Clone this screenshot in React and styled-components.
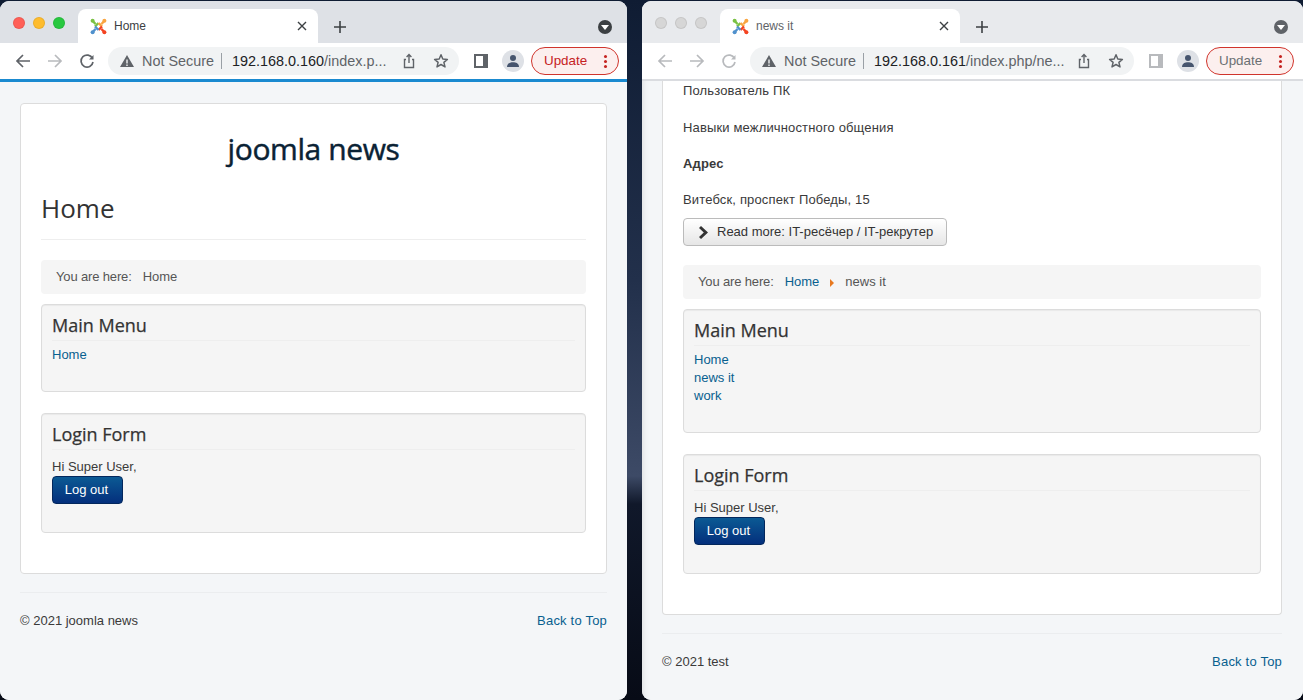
import React from 'react';
import styled, { createGlobalStyle } from 'styled-components';

const GlobalStyle = createGlobalStyle`
  html, body { margin: 0; padding: 0; height: 700px; overflow: hidden; }
  body { font-family: "Liberation Sans", Arial, sans-serif; font-size: 13px; line-height: 18px; color: #3a3a3a; }
  * { box-sizing: border-box; }
`;

const Desktop = styled.div`
  width: 1303px;
  height: 700px;
  display: flex;
  justify-content: space-between;
  overflow: hidden;
  background: linear-gradient(180deg, #0f1c33 0%, #22304b 40%, #3d4a66 68%, #10182a 72%, #070b16 100%);
`;

const Window = styled.div`
  width: ${p => p.$width}px;
  height: 699px;
  margin-top: 1px;
  display: flex;
  flex-direction: column;
  border-radius: 9px;
  overflow: hidden;
  background: #f4f6f8;
`;

const TitleBar = styled.div`
  height: 42px;
  flex: none;
  padding: 8px 0 0 13px;
  display: flex;
  align-items: flex-start;
  background: ${p => p.$active ? '#dee1e6' : '#e8eaed'};
`;

const Lights = styled.div`
  display: flex;
  gap: 8px;
  width: 65px;
  flex: none;
  padding-top: 8px;
`;

const Light = styled.span`
  width: 12px;
  height: 12px;
  border-radius: 50%;
  background: ${p => p.$color};
  box-shadow: inset 0 0 0 1px rgba(0,0,0,.08);
`;

const Tab = styled.div`
  width: 240px;
  height: 34px;
  flex: none;
  border-radius: 8px 8px 0 0;
  background: #fff;
  display: flex;
  align-items: center;
  padding: 0 8px 0 12px;
  gap: 7px;
  color: ${p => p.$active ? '#3c4043' : '#5f6368'};
  font-size: 12px;
`;

const TabTitle = styled.span`
  flex: 1;
`;

const CloseX = styled.svg`
  width: 10px;
  height: 10px;
  margin-right: 3px;
`;

const PlusIcon = styled.svg`
  width: 14px;
  height: 14px;
  margin: 11px 0 0 15px;
  flex: none;
`;

const TabMenu = styled.div`
  width: 14px;
  height: 14px;
  margin: 11px 15px 0 auto;
  border-radius: 50%;
  background: ${p => p.$active ? '#3c4043' : '#5f6368'};
  display: flex;
  align-items: center;
  justify-content: center;
  &::after {
    content: '';
    border-left: 4px solid transparent;
    border-right: 4px solid transparent;
    border-top: 5px solid #fff;
    margin-top: 1px;
  }
`;

const Toolbar = styled.div`
  height: 36px;
  flex: none;
  padding: 4px 0 4px 15px;
  background: #fff;
  display: flex;
  align-items: center;
`;

const NavGroup = styled.div`
  display: flex;
  align-items: center;
  gap: 16px;
  width: 93px;
  flex: none;
`;

const NavSvg = styled.svg`
  width: 16px;
  height: 16px;
  flex: none;
`;

const Omnibox = styled.div`
  width: ${p => p.$width}px;
  height: 28px;
  flex: none;
  border-radius: 14px;
  background: #f1f3f4;
  display: flex;
  align-items: center;
  padding: 0 10px 0 11px;
  font-size: 14.4px;
  white-space: nowrap;
  color: #202124;
`;

const NotSecure = styled.span`
  color: #5f6368;
  margin-left: 7px;
`;

const Sep = styled.span`
  width: 1px;
  height: 16px;
  background: #9aa0a6;
  margin: 0 10px 0 7px;
`;

const Url = styled.span`
  flex: 1;
  & > i { font-style: normal; color: #5f6368; }
`;

const OmniIcons = styled.div`
  display: flex;
  align-items: center;
  gap: 16px;
`;

const PanelIcon = styled.div`
  width: 14px;
  height: 14px;
  margin-left: 15px;
  flex: none;
  border: 2px solid ${p => p.$active ? '#5f6368' : '#b8babd'};
  border-right-width: 5px;
  background: #fff;
`;

const Avatar = styled.div`
  width: 22px;
  height: 22px;
  margin-left: 14px;
  flex: none;
  border-radius: 50%;
  background: #dee1e6;
  display: flex;
  align-items: center;
  justify-content: center;
`;

const UpdatePill = styled.div`
  width: 88px;
  height: 28px;
  margin-left: 7px;
  flex: none;
  border: 1px solid #d0342c;
  border-radius: 14px;
  background: #fcefee;
  color: ${p => p.$active ? '#c5221f' : '#6b6f73'};
  font-size: 13.4px;
  display: flex;
  align-items: center;
  padding: 0 11px 0 12px;
  justify-content: space-between;
`;

const Dots = styled.span`
  display: flex;
  flex-direction: column;
  gap: 2px;
  & > b { width: 3px; height: 3px; border-radius: 50%; background: #c5221f; display: block; }
`;

const LoadBar = styled.div`
  height: ${p => p.$height}px;
  flex: none;
  background: ${p => p.$color};
`;

const Page = styled.div`
  flex: 1;
  min-height: 0;
  overflow: hidden;
  padding: ${p => p.$top}px ${p => p.$right}px 0 20px;
  background: #f4f6f8;
  ${p => p.$shaded && 'box-shadow: inset 7px 0 6px -6px rgba(0,0,0,.1);'}
`;

const Card = styled.div`
  background: #fff;
  border: 1px solid #dcdcdc;
  border-radius: 4px;
  padding: ${p => p.$top}px 20px 19px;
  ${p => p.$scrolled && 'border-top: 0; border-radius: 0 0 4px 4px;'}
`;

const Brand = styled.div`
  text-align: center;
  font-family: "Open Sans", sans-serif;
  font-weight: 400;
  font-size: 30px;
  line-height: 38px;
  color: #0a2234;
  letter-spacing: -0.4px;
  -webkit-text-stroke: 0.45px #0a2234;
  margin-bottom: 23px;
`;

const PageHeading = styled.h2`
  margin: 0 0 20px;
  height: 49px;
  border-bottom: 1px solid #eee;
  font-family: "Open Sans", sans-serif;
  font-weight: 400;
  font-size: 26px;
  line-height: 34px;
  color: #333;
`;

const Para = styled.p`
  margin: 0 0 ${p => p.$gap || 18}px;
  font-weight: ${p => p.$bold ? 700 : 400};
  letter-spacing: 0.15px;
`;

const ReadMore = styled.a`
  display: flex;
  width: fit-content;
  align-items: center;
  height: 28px;
  padding: 0 13px 0 14px;
  margin-top: -9px;
  margin-bottom: 19px;
  border: 1px solid #bbb;
  border-radius: 4px;
  background: linear-gradient(180deg, #fff, #e6e6e6);
  color: #333;
  gap: 8px;
`;

const Breadcrumb = styled.div`
  height: 34px;
  margin-bottom: 10px;
  border-radius: 4px;
  background: #f5f5f5;
  padding: 0 15px;
  display: flex;
  align-items: center;
  color: #555;
`;

const Here = styled.span`
  margin-right: 11px;
  letter-spacing: -0.15px;
`;

const Crumb = styled.a`
  color: #08608f;
  letter-spacing: ${p => p.$wide ? '0.2px' : '0'};
`;

const CrumbArrow = styled.span`
  width: 0;
  height: 0;
  margin: 2px 11px 0 11px;
  border-left: 4px solid #e8791f;
  border-top: 4px solid transparent;
  border-bottom: 4px solid transparent;
`;

const Module = styled.div`
  height: ${p => p.$height}px;
  margin-bottom: 21px;
  padding: 10px;
  background: #f5f5f5;
  border: 1px solid #dcdcdc;
  border-radius: 4px;
  box-shadow: inset 0 1px 1px rgba(0,0,0,.05);
`;

const ModuleTitle = styled.h3`
  margin: 0 0 ${p => p.$gap}px;
  height: 26px;
  border-bottom: 1px solid #eee;
  font-family: "Open Sans", sans-serif;
  font-weight: 400;
  font-size: 18px;
  line-height: 21px;
  color: #333;
  -webkit-text-stroke: 0.25px #333;
`;

const MenuLink = styled.a`
  display: block;
  color: #08608f;
`;

const LogoutButton = styled.button`
  display: block;
  width: 71px;
  height: 28px;
  padding: 0 2px 0 0;
  border: 1px solid #03275c;
  border-radius: 4px;
  background: linear-gradient(180deg, #0b5a94, #042f7c);
  color: #fff;
  font: 13px/18px "Liberation Sans", sans-serif;
`;

const FooterRule = styled.div`
  height: 1px;
  background: #ebedef;
  margin-top: 18px;
`;

const Footer = styled.div`
  display: flex;
  justify-content: space-between;
  margin-top: 19px;
`;

const JoomlaLogo = () => (
  <svg width="17" height="17" viewBox="0 0 17 17" fill="none" strokeWidth="2.4">
    <path d="M2.8 3 L5.5 6 M5 8.5 L8.5 5" stroke="#7ac143" />
    <path d="M14.2 3 L11.5 6 M8.5 5 L12 8.5" stroke="#f9a541" />
    <path d="M14.2 14 L11.5 11 M12 8.5 L8.5 12" stroke="#f44321" />
    <path d="M2.8 14 L5.5 11 M8.5 12 L5 8.5" stroke="#5091cd" />
    <circle cx="2.6" cy="2.8" r="2" fill="#7ac143" />
    <circle cx="14.4" cy="2.8" r="2" fill="#f9a541" />
    <circle cx="2.6" cy="14.2" r="2" fill="#5091cd" />
    <circle cx="14.4" cy="14.2" r="2" fill="#f44321" />
  </svg>
);

const WarningIcon = () => (
  <NavSvg viewBox="0 0 16 16"><path d="M8 2 L15 14 H1 Z M7.3 6.5 V10.5 H8.7 V6.5 Z M7.3 11.5 V13 H8.7 V11.5 Z" fill="#5f6368" fillRule="evenodd" /></NavSvg>
);

const ShareIcon = () => (
  <NavSvg viewBox="0 0 16 16" fill="none" stroke="#5f6368" strokeWidth="1.4">
    <path d="M5 6.5 H3.5 V14.5 H12.5 V6.5 H11" />
    <path d="M8 10 V1.8 M5.6 4 L8 1.6 L10.4 4" />
  </NavSvg>
);

const StarIcon = () => (
  <NavSvg viewBox="0 0 16 16" fill="none" stroke="#5f6368" strokeWidth="1.5">
    <path d="M8 1.8 L9.8 6 L14.4 6.4 L10.9 9.4 L12 13.9 L8 11.5 L4 13.9 L5.1 9.4 L1.6 6.4 L6.2 6 Z" strokeLinejoin="round" />
  </NavSvg>
);

const PersonIcon = () => (
  <svg width="14" height="14" viewBox="0 0 14 14" fill="#46556e">
    <circle cx="7" cy="4" r="3" />
    <path d="M1 13 C1 9.5 4 8.3 7 8.3 C10 8.3 13 9.5 13 13 Z" />
  </svg>
);

const ChevronGlyph = () => (
  <svg width="11" height="13" viewBox="0 0 11 13" fill="#333">
    <path d="M3 0 L10 6.5 L3 13 L1 11 L5.8 6.5 L1 2 Z" />
  </svg>
);

const BrowserChrome = ({ active, title, host, path, omniWidth }) => {
  const backColor = active ? '#5f6368' : '#b8babd';
  return (
    <>
      <TitleBar $active={active}>
        <Lights>
          <Light $color={active ? '#ff5f57' : '#d6d6d6'} />
          <Light $color={active ? '#febc2e' : '#d6d6d6'} />
          <Light $color={active ? '#28c840' : '#d6d6d6'} />
        </Lights>
        <Tab $active={active}>
          <JoomlaLogo />
          <TabTitle>{title}</TabTitle>
          <CloseX viewBox="0 0 10 10"><path d="M1 1 L9 9 M9 1 L1 9" stroke="#3c4043" strokeWidth="1.4" /></CloseX>
        </Tab>
        <PlusIcon viewBox="0 0 14 14"><path d="M7 1 V13 M1 7 H13" stroke="#3c4043" strokeWidth="1.6" /></PlusIcon>
        <TabMenu $active={active} />
      </TitleBar>
      <Toolbar>
        <NavGroup>
          <NavSvg viewBox="0 0 16 16" fill="none" stroke={backColor} strokeWidth="1.7"><path d="M15 8 H2 M8 2 L2 8 L8 14" /></NavSvg>
          <NavSvg viewBox="0 0 16 16" fill="none" stroke="#b8babd" strokeWidth="1.7"><path d="M1 8 H14 M8 2 L14 8 L8 14" /></NavSvg>
          <NavSvg viewBox="0 0 16 16" fill="none" stroke={backColor} strokeWidth="1.7"><path d="M13.5 5.5 A6 6 0 1 0 14 9" /><path d="M14.5 2 V6.5 H10 Z" fill={backColor} stroke="none" /></NavSvg>
        </NavGroup>
        <Omnibox $width={omniWidth}>
          <WarningIcon />
          <NotSecure>Not Secure</NotSecure>
          <Sep />
          <Url>{host}<i>{path}</i></Url>
          <OmniIcons>
            <ShareIcon />
            <StarIcon />
          </OmniIcons>
        </Omnibox>
        <PanelIcon $active={active} />
        <Avatar><PersonIcon /></Avatar>
        <UpdatePill $active={active}>
          Update
          <Dots><b /><b /><b /></Dots>
        </UpdatePill>
      </Toolbar>
    </>
  );
};

const MainMenu = ({ height, links }) => (
  <Module $height={height}>
    <ModuleTitle $gap={5}>Main Menu</ModuleTitle>
    {links.map(item => <MenuLink key={item}>{item}</MenuLink>)}
  </Module>
);

const LoginForm = () => (
  <Module $height={120}>
    <ModuleTitle $gap={8}>Login Form</ModuleTitle>
    Hi Super User,
    <LogoutButton>Log out</LogoutButton>
  </Module>
);

const PageFooter = ({ name }) => (
  <>
    <FooterRule />
    <Footer>
      <span>© 2021 {name}</span>
      <Crumb $wide>Back to Top</Crumb>
    </Footer>
  </>
);

export default function App() {
  return (
    <Desktop>
      <GlobalStyle />
      <Window $width={627}>
        <BrowserChrome active title="Home" host="192.168.0.160" path="/index.p..." omniWidth={351} />
        <LoadBar $color="#1a8ad0" $height={3} />
        <Page $top={21} $right={20}>
          <Card $top={26}>
            <Brand>joomla news</Brand>
            <PageHeading>Home</PageHeading>
            <Breadcrumb>
              <Here>You are here:</Here>
              Home
            </Breadcrumb>
            <MainMenu height={88} links={['Home']} />
            <LoginForm />
          </Card>
          <PageFooter name="joomla news" />
        </Page>
      </Window>
      <Window $width={661}>
        <BrowserChrome title="news it" host="192.168.0.161" path="/index.php/ne..." omniWidth={384} />
        <LoadBar $color="#dadce0" $height={2} />
        <Page $top={0} $right={21} $shaded>
          <Card $top={1} $scrolled>
            <Para $gap={19}>Пользователь ПК</Para>
            <Para>Навыки межличностного общения</Para>
            <Para $bold>Адрес</Para>
            <Para>Витебск, проспект Победы, 15</Para>
            <ReadMore>
              <ChevronGlyph />
              Read more: IT-ресёчер / IT-рекрутер
            </ReadMore>
            <Breadcrumb>
              <Here>You are here:</Here>
              <Crumb>Home</Crumb>
              <CrumbArrow />
              news it
            </Breadcrumb>
            <MainMenu height={124} links={['Home', 'news it', 'work']} />
            <LoginForm />
          </Card>
          <PageFooter name="test" />
        </Page>
      </Window>
    </Desktop>
  );
}
